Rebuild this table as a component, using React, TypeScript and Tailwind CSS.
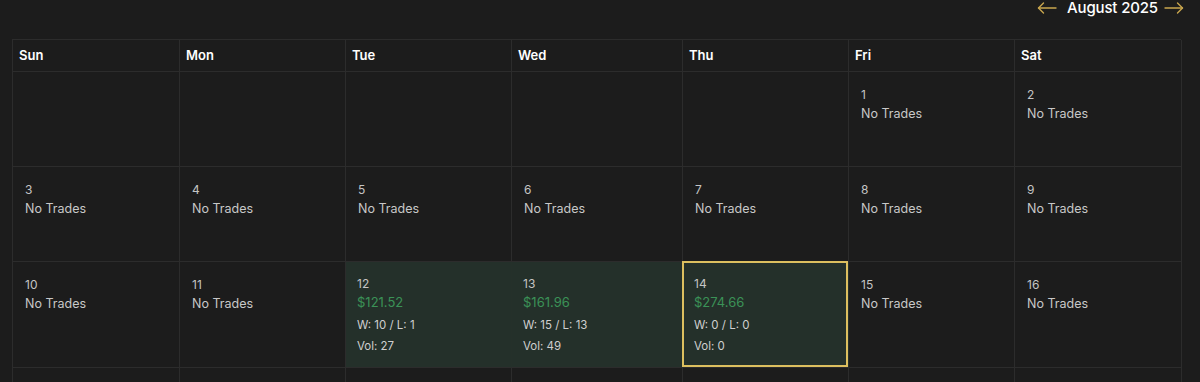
import { useState } from "react";

type Day = {
  day: number;
  pnl?: string;
  wins?: number;
  losses?: number;
  vol?: number;
};

const weekdays = ["Sun", "Mon", "Tue", "Wed", "Thu", "Fri", "Sat"];

const trades: Record<number, Omit<Day, "day">> = {
  12: { pnl: "$121.52", wins: 10, losses: 1, vol: 27 },
  13: { pnl: "$161.96", wins: 15, losses: 13, vol: 49 },
  14: { pnl: "$274.66", wins: 0, losses: 0, vol: 0 },
};

function Arrow({ dir }: { dir: "left" | "right" }) {
  return (
    <svg
      width="20"
      height="12"
      viewBox="0 0 20 12"
      fill="none"
      stroke="#c9a64e"
      strokeWidth="1.4"
      strokeLinecap="round"
      strokeLinejoin="round"
      className={dir === "right" ? "rotate-180" : ""}
    >
      <path d="M19 6H1.5" />
      <path d="M6.5 1L1.5 6l5 5" />
    </svg>
  );
}

function Cell({ d, selected }: { d: Day | null; selected?: boolean }) {
  if (!d) {
    return <div className="min-h-[95px] border-r border-b border-[#2c2c2c]" />;
  }

  const t = trades[d.day];

  if (t) {
    return (
      <div className="relative border-r border-b border-r-[#25302a] border-b-[#2c2c2c] bg-[#24302a] pl-[11px] pr-[12px] pb-[13px] pt-[14px]">
        {selected && (
          <div className="pointer-events-none absolute -left-px -top-px right-0 bottom-0 border-2 border-[#dcbf5f]" />
        )}
        <div className="text-[12px] leading-4 text-[#c4c4c4]">{d.day}</div>
        <div className="text-[13px] leading-5 text-[#3b9257]">{t.pnl}</div>
        <div className="mt-[5px] text-[11.5px] leading-4 text-[#cfcfcf]">
          W: {t.wins} / L: {t.losses}
        </div>
        <div className="mt-[5px] text-[11.5px] leading-4 text-[#cfcfcf]">
          Vol: {t.vol}
        </div>
      </div>
    );
  }

  return (
    <div className="min-h-[95px] border-r border-b border-[#2c2c2c] px-[12px] pt-[15px]">
      <div className="text-[12px] leading-4 text-[#c4c4c4]">{d.day}</div>
      <div className="mt-px text-[12.5px] leading-5 text-[#c8c8c8]">No Trades</div>
    </div>
  );
}

export default function App() {
  const [selected] = useState(14);

  // August 2025 starts on a Friday
  const cells: (Day | null)[] = [
    ...Array(5).fill(null),
    ...Array.from({ length: 31 }, (_, i) => ({ day: i + 1 })),
  ];
  while (cells.length % 7 !== 0) cells.push(null);

  return (
    <div className="min-h-screen bg-[#1c1c1c] px-[12px] font-['Inter',sans-serif] text-white">
      {/* Month nav */}
      <div className="flex h-[39px] items-start justify-end pr-[4px]">
        <div className="-mt-[2px] flex items-center">
          <button className="flex h-5 items-center">
            <Arrow dir="left" />
          </button>
          <span className="ml-[10px] mr-[6px] text-[15px] font-medium leading-5 tracking-[-0.01em]">
            August 2025
          </span>
          <button className="flex h-5 items-center">
            <Arrow dir="right" />
          </button>
        </div>
      </div>

      {/* Calendar */}
      <div className="grid w-[1169px] grid-cols-[167px_166px_166px_171px_166px_166px_167px] border-t border-l border-[#2c2c2c]">
        {weekdays.map((w) => (
          <div
            key={w}
            className="flex h-[32px] items-center border-r border-b border-[#2c2c2c] px-[6px] text-[13px] font-semibold"
          >
            {w}
          </div>
        ))}
        {cells.map((d, i) => (
          <Cell key={i} d={d} selected={d?.day === selected} />
        ))}
      </div>
    </div>
  );
}
